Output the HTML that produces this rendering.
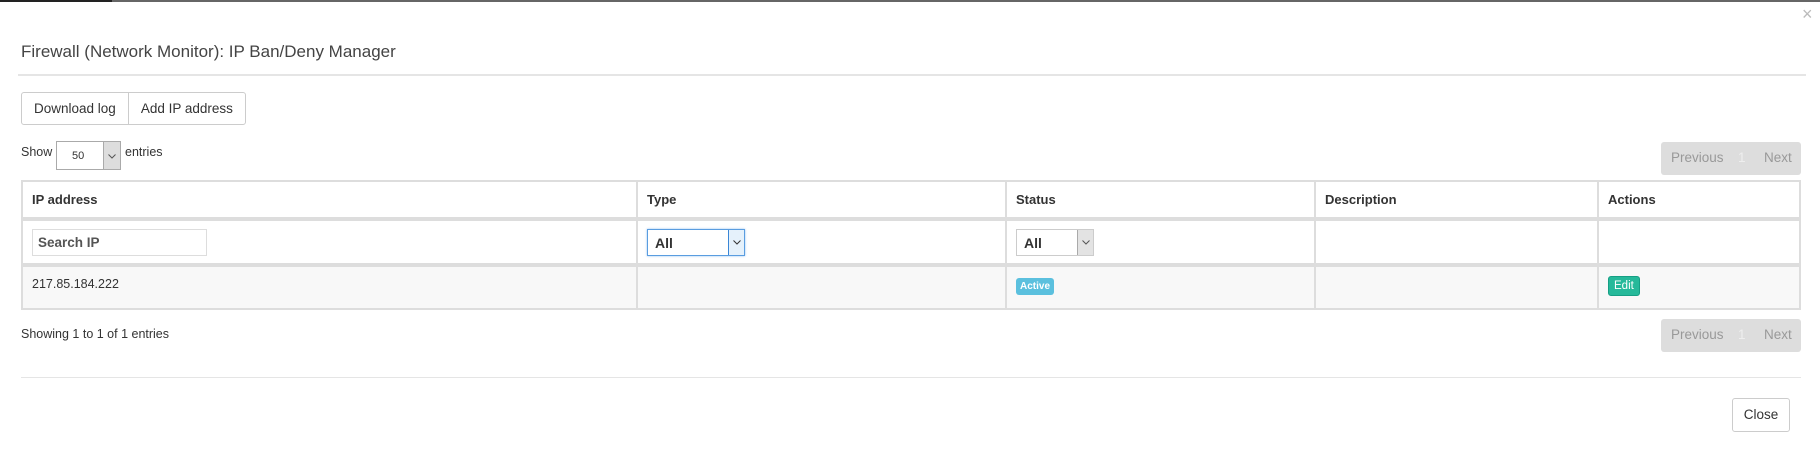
<!DOCTYPE html>
<html><head><meta charset="utf-8"><style>
*{box-sizing:border-box;margin:0;padding:0}
body{width:1820px;height:460px;background:#fff;font-family:"Liberation Sans",Arial,sans-serif;color:#333;font-size:13px;position:relative;overflow:hidden}
.a{position:absolute}
.topl{left:0;top:0;width:1820px;height:2px;background:#666}
.topd{left:0;top:0;width:112px;height:2px;background:#222}
.title{left:21px;top:42px;font-size:17px;color:#444}
.hl{left:18px;top:74px;width:1788px;height:2px;background:#e5e5e5}
.x{left:1802px;top:4px;font-size:18px;color:#bbb}
.btns{left:21px;top:92px;height:33px;border:1px solid #ccc;border-radius:3px;display:flex}
.btns div{padding:0 12px;line-height:31px;font-size:13.5px;color:#333}
.btns div+div{border-left:1px solid #ccc}
.pag{width:140px;height:33px;background:#ddd;border-radius:3px;left:1661px;color:#999;font-size:13.5px}
.pag span{position:absolute;top:8px}
table{position:absolute;left:21px;top:180px;width:1780px;border-collapse:collapse}
td,th{border:2px solid #ddd;text-align:left;padding:0 9px}
th{height:38px;font-weight:bold;border-bottom-width:4px}
tr.f td{height:46px;border-bottom-width:4px}
tr.d td{height:44px;background:#f8f8f8;vertical-align:top;padding-top:10px}
.sel{display:inline-block;position:relative;height:27px;border:1px solid #ccc;background:#fff;font-weight:bold;font-size:14px;padding:5px 7px;vertical-align:middle}
.sel i{position:absolute;right:0;top:0;bottom:0;width:16px;background:#e3e3e3;border-left:1px solid #aaa}
svg.ch{position:absolute;left:50%;top:50%;margin-left:-4px;margin-top:-2px}
</style></head><body>
<div class="a topl"></div><div class="a topd"></div>
<div class="a x">×</div>
<div class="a title">Firewall (Network Monitor): IP Ban/Deny Manager</div>
<div class="a hl"></div>
<div class="a btns"><div>Download log</div><div>Add IP address</div></div>
<div class="a" style="left:21px;top:145px;font-size:12.5px">Show</div>
<div class="a" style="left:56px;top:141px;width:65px;height:29px;border:1px solid #aaa;background:#fff"><span class="a" style="left:15px;top:8px;font-size:11px">50</span><span class="a" style="right:0;top:0;bottom:0;width:17px;background:#ddd;border-left:1px solid #aaa"><svg class="ch" width="8" height="5" viewBox="0 0 8 5"><path d="M0.5 0.5L4 4L7.5 0.5" fill="none" stroke="#555" stroke-width="1"/></svg></span></div>
<div class="a" style="left:125px;top:145px;font-size:12.5px">entries</div>
<div class="a pag" style="top:142px"><span style="left:10px">Previous</span><span style="left:77px;color:#eee">1</span><span style="left:103px">Next</span></div>
<table>
<tr><th style="width:615px">IP address</th><th style="width:369px">Type</th><th style="width:309px">Status</th><th style="width:283px">Description</th><th>Actions</th></tr>
<tr class="f"><td><div style="width:175px;height:27px;border:1px solid #ddd;font-weight:bold;font-size:13.5px;color:#555;padding:5px 5px">Search IP</div></td>
<td><div class="sel" style="width:98px;border-color:#5a9de0;box-shadow:0 0 2px #8bbdf0">All<i style="background:#e5f1fb;border-left-color:#3a86d6"><svg class="ch" width="8" height="5" viewBox="0 0 8 5"><path d="M0.5 0.5L4 4L7.5 0.5" fill="none" stroke="#333" stroke-width="1"/></svg></i></div></td>
<td><div class="sel" style="width:78px">All<i><svg class="ch" width="8" height="5" viewBox="0 0 8 5"><path d="M0.5 0.5L4 4L7.5 0.5" fill="none" stroke="#555" stroke-width="1"/></svg></i></div></td><td></td><td></td></tr>
<tr class="d"><td style="font-size:12.5px">217.85.184.222</td><td></td>
<td><span style="display:inline-block;background:#5bc0de;color:#fff;font-size:10px;font-weight:bold;padding:3px 4px;border-radius:3px">Active</span></td><td></td>
<td><span style="display:inline-block;background:#26b99a;border:1px solid #169f85;color:#fff;font-size:11.5px;padding:3px 5px;border-radius:3px;margin-top:-3px">Edit</span></td></tr>
</table>
<div class="a" style="left:21px;top:327px;font-size:12.5px">Showing 1 to 1 of 1 entries</div>
<div class="a pag" style="top:319px"><span style="left:10px">Previous</span><span style="left:77px;color:#eee">1</span><span style="left:103px">Next</span></div>
<div class="a" style="left:21px;top:377px;width:1780px;height:1px;background:#e5e5e5"></div>
<div class="a" style="left:1732px;top:398px;width:58px;height:34px;border:1px solid #ccc;border-radius:3px;text-align:center;line-height:32px;font-size:13.5px">Close</div>
</body></html>
